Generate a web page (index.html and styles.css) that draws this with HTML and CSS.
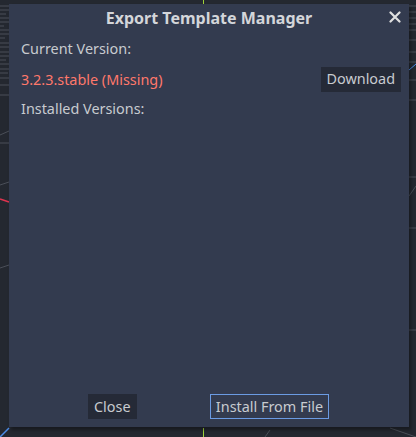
FILE: index.html
```html
<!DOCTYPE html>
<html>
<head>
<meta charset="utf-8">
<link rel="stylesheet" href="styles.css">
</head>
<body>
<svg class="canvas" width="416" height="437" viewBox="0 0 416 437">
  <g stroke="#4a4f58" stroke-width="1" fill="none">
    <path d="M0 6 H9 M0 10 H9 M0 14 H6 M0 18 H9 M0 22 H9 M0 26 H4 M0 30 H9 M0 34 H9 M0 38 H5 M0 43 H9 M0 47 H9 M0 52 H9 M0 56 H9 M0 60 H6 M0 64 H9 M0 69 H9 M0 73 H8 M0 78 H9 M0 85 H9 M0 95 H9"/>
    <path d="M409 6 H416 M409 12 H416 M409 18 H416 M409 24 H416 M409 30 H416 M409 40 H416 M409 52 H416 M409 62 H416 M409 80 H416 M409 100 H416"/>
    <path d="M0 135 L9 131 M0 143 L9 143 M0 185 L9 182 M409 177 H416 M409 196 L416 186 M409 228 H416 M0 268 L9 265 M409 330 H416"/>
    <path d="M265 437 L270 430 M390 428 L416 437"/>
  </g>
  <path d="M0 199 L9 202" stroke="#e0344f" stroke-width="1.5" fill="none"/>
  <path d="M0 437 L9 428" stroke="#4b8ce8" stroke-width="1.5" fill="none"/>
  <path d="M409 70 L416 64" stroke="#4b8ce8" stroke-width="1" fill="none"/>
  <path d="M203.5 428 V437 M203.5 0 V4" stroke="#9fd33a" stroke-width="1" fill="none"/>
</svg>
<div class="dialog">
  <div class="titlebar">
    <span class="title">Export Template Manager</span>
    <svg class="close-x" width="12" height="12" viewBox="0 0 12 12"><path d="M1.5 1.5 L10.5 10.5 M10.5 1.5 L1.5 10.5" stroke="#e0e0e0" stroke-width="2.2" stroke-linecap="round"/></svg>
  </div>
  <div class="content">
    <div class="label">Current Version:</div>
    <div class="row">
      <span class="missing">3.2.3.stable (Missing)</span>
      <button class="btn">Download</button>
    </div>
    <div class="label">Installed Versions:</div>
    <div class="list"></div>
  </div>
  <div class="buttons">
    <button class="btn">Close</button>
    <button class="btn focus">Install From File</button>
  </div>
</div>
</body>
</html>
```
FILE: styles.css
```css
html, body {
  margin: 0;
  padding: 0;
}
body {
  width: 416px;
  height: 437px;
  background: #242830;
  position: relative;
  overflow: hidden;
  font-family: "Noto Sans", "Open Sans", sans-serif;
  font-size: 14.4px;
  color: #c8cbd0;
}
.canvas {
  position: absolute;
  left: 0;
  top: 0;
}
.dialog {
  position: relative;
  margin: 4px 0 0 9px;
  width: 400px;
  height: 423px;
  background: #333b4f;
  box-shadow: 2px 3px 3px rgba(0,0,0,0.35);
  display: flex;
  flex-direction: column;
  box-sizing: border-box;
}
.titlebar {
  height: 28px;
  display: flex;
  align-items: center;
  justify-content: center;
  position: relative;
}
.title {
  font-weight: bold;
  font-size: 16px;
  color: #d4d6da;
  margin-top: -1px;
}
.close-x {
  position: absolute;
  right: 8px;
  top: 7px;
}
.content {
  flex: 1;
  display: flex;
  flex-direction: column;
  padding: 2px 8px 0 12px;
}
.label {
  height: 30px;
  line-height: 30px;
}
.row {
  display: flex;
  justify-content: space-between;
  align-items: center;
  height: 30px;
}
.missing {
  color: #ff786b;
}
.btn {
  font-family: "Noto Sans", "Open Sans", sans-serif;
  font-size: 14.4px;
  color: #c8cbd0;
  background: #252a37;
  border: 1px solid #252a37;
  height: 25px;
  padding: 0 5px;
  line-height: 22px;
  margin: 0;
}
.focus {
  background: #333b4f;
  border-color: #6b9be3;
}
.list {
  flex: 1;
}
.buttons {
  height: 33px;
  display: flex;
  align-items: flex-start;
  justify-content: space-between;
  padding: 0 80px 0 79px;
}
```
